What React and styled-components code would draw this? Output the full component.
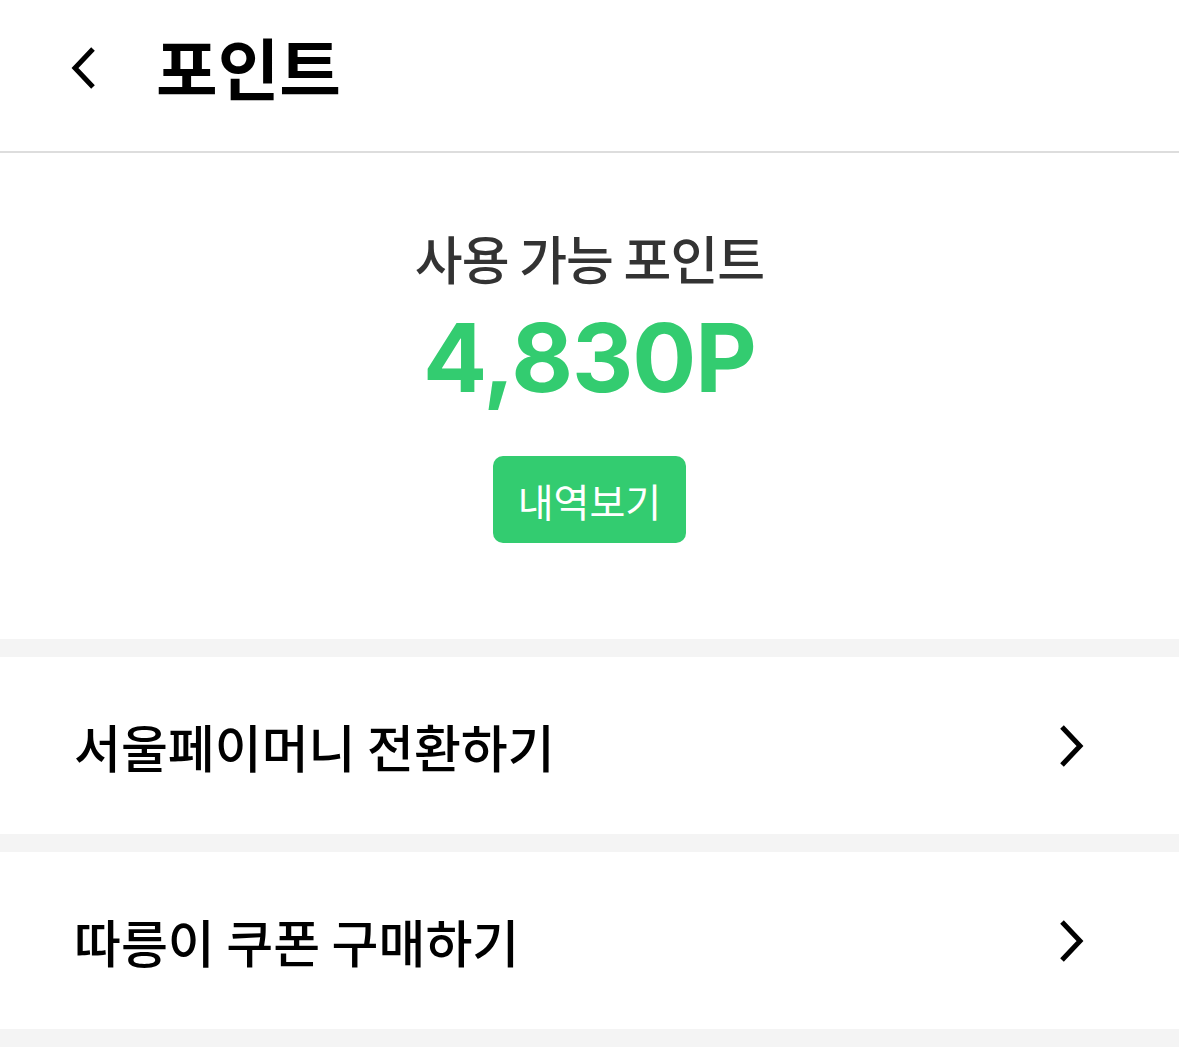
import React from "react";
import styled, { createGlobalStyle } from "styled-components";

const GlobalStyle = createGlobalStyle`
  body {
    margin: 0;
    background: #ffffff;
    font-family: "Noto Sans CJK KR", "Noto Sans", sans-serif;
  }
`;

const Page = styled.div`
  width: 1179px;
  min-height: 1053px;
  background: #ffffff;
`;

const Header = styled.header`
  display: flex;
  align-items: center;
  padding-left: 63px;
  gap: 53px;
  border-bottom: 2px solid #dddddd;
  box-sizing: border-box;
  height: 153px;
`;

const BackButton = styled.button`
  border: none;
  background: none;
  padding: 0;
  width: 40px;
  height: 48px;
  display: flex;
  align-items: center;
  justify-content: center;
  margin-top: -16px;
  cursor: pointer;
`;

const Title = styled.h1`
  margin: 0;
  margin-top: -20px;
  font-size: 67px;
  font-weight: 700;
  color: #000000;
`;

const Summary = styled.section`
  display: flex;
  flex-direction: column;
  align-items: center;
  padding-top: 72px;
  height: 486px;
  box-sizing: border-box;
`;

const Label = styled.div`
  font-size: 52px;
  font-weight: 500;
  color: #333333;
  line-height: 1.2;
  letter-spacing: -1px;
  margin-top: 2px;
`;

const Amount = styled.div`
  font-family: "Inter", "Liberation Sans", sans-serif;
  font-size: 95px;
  font-weight: 700;
  color: #33cc70;
  line-height: 1.2;
  margin-top: 12px;
  letter-spacing: -1px;
`;

const HistoryButton = styled.button`
  margin-top: 41px;
  width: 193px;
  height: 87px;
  border: none;
  border-radius: 10px;
  background: #33cc70;
  color: #ffffff;
  font-family: "Noto Sans CJK KR", sans-serif;
  font-size: 39px;
  font-weight: 400;
  padding: 0;
  cursor: pointer;
`;

const Divider = styled.div`
  height: 18px;
  background: #f4f4f4;
`;

const Row = styled.button`
  display: flex;
  width: 100%;
  height: 177px;
  align-items: center;
  justify-content: space-between;
  padding: 0 93px 0 74px;
  box-sizing: border-box;
  border: none;
  background: #ffffff;
  cursor: pointer;
`;

const RowText = styled.span`
  font-family: "Noto Sans CJK KR", sans-serif;
  font-size: 51px;
  font-weight: 500;
  color: #000000;
`;

const ChevronLeft = () => (
  <svg width="28" height="44" viewBox="0 0 28 44">
    <polyline
      points="24,3 6,22 24,41"
      fill="none"
      stroke="#000"
      strokeWidth="5"
    />
  </svg>
);

const ChevronRight = () => (
  <svg width="28" height="44" viewBox="0 0 28 44">
    <polyline
      points="4,3 22,22 4,41"
      fill="none"
      stroke="#000"
      strokeWidth="5"
    />
  </svg>
);

const menu = ["서울페이머니 전환하기", "따릉이 쿠폰 구매하기"];

export default function App() {
  return (
    <Page>
      <GlobalStyle />
      <Header>
        <BackButton>
          <ChevronLeft />
        </BackButton>
        <Title>포인트</Title>
      </Header>
      <Summary>
        <Label>사용 가능 포인트</Label>
        <Amount>4,830P</Amount>
        <HistoryButton>내역보기</HistoryButton>
      </Summary>
      {menu.map((item) => (
        <React.Fragment key={item}>
          <Divider />
          <Row>
            <RowText>{item}</RowText>
            <ChevronRight />
          </Row>
        </React.Fragment>
      ))}
      <Divider />
    </Page>
  );
}
